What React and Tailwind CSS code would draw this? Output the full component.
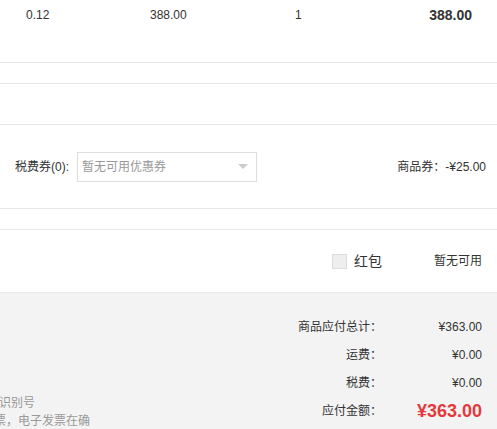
import React from 'react';

const font = { fontFamily: '"Liberation Sans", Arial, "Noto Sans CJK SC", sans-serif' };

const summary = [
    { label: '商品应付总计：', value: '¥363.00' },
    { label: '运费：', value: '¥0.00' },
    { label: '税费：', value: '¥0.00' },
];

const App = () => {
    return (
        <div className="w-[497px] h-[429px] overflow-hidden bg-white text-[#333] text-[12px]" style={font}>
            {/* Goods row */}
            <div className="h-[63px] border-b border-[#e6e6e6] flex items-start pt-[7px]">
                <span className="w-[150px] pl-[26px] leading-[16px]">0.12</span>
                <span className="w-[145px] leading-[16px]">388.00</span>
                <span className="flex-1 leading-[16px]">1</span>
                <span className="pr-[25px] text-[14px] font-bold leading-[16px]">388.00</span>
            </div>
            <div className="h-[21px] border-b border-[#e6e6e6]"></div>
            <div className="h-[41px] border-b border-[#e6e6e6]"></div>

            {/* Coupons */}
            <div className="h-[84px] border-b border-[#e6e6e6] flex items-center pl-[15px] pr-[11px]">
                <span className="w-[62px]">税费券(0):</span>
                <div className="w-[180px] h-[30px] border border-[#ddd] flex items-center justify-between pl-[4px] pr-[8px]">
                    <span className="text-[#999]">暂无可用优惠券</span>
                    <span className="w-0 h-0 border-l-[5px] border-r-[5px] border-t-[5px] border-l-transparent border-r-transparent border-t-[#ccc]"></span>
                </div>
                <span className="ml-auto">商品券：-¥25.00</span>
            </div>
            <div className="h-[21px] border-b border-[#e6e6e6]"></div>

            {/* Red packet */}
            <div className="h-[62px] flex items-center justify-end pr-[15px]">
                <span className="w-[15px] h-[15px] bg-[#eee] border border-[#ddd] mr-[7px]"></span>
                <span className="text-[14px]">红包</span>
                <span className="ml-[52px]">暂无可用</span>
            </div>

            {/* Totals */}
            <div className="h-[200px] bg-[#f3f3f3] border-t border-[#e8e8e8] flex">
                <div className="w-[200px] overflow-hidden pt-[101px] text-[#999] leading-[18px] whitespace-nowrap">
                    <div className="-ml-[13px]">人识别号</div>
                    <div className="-ml-[18px]">发票，电子发票在确</div>
                </div>
                <div className="flex-1 flex flex-col items-end pt-[20px] pr-[15px]">
                    {summary.map((row) => (
                        <div key={row.label} className="flex items-center h-[28px]">
                            <span className="text-right">{row.label}</span>
                            <span className="w-[100px] text-right">{row.value}</span>
                        </div>
                    ))}
                    <div className="flex items-center h-[28px]">
                        <span className="text-right">应付金额：</span>
                        <span className="w-[100px] text-right text-[18px] font-bold text-[#e4393c]">¥363.00</span>
                    </div>
                </div>
            </div>
        </div>
    );
};

export default App;
